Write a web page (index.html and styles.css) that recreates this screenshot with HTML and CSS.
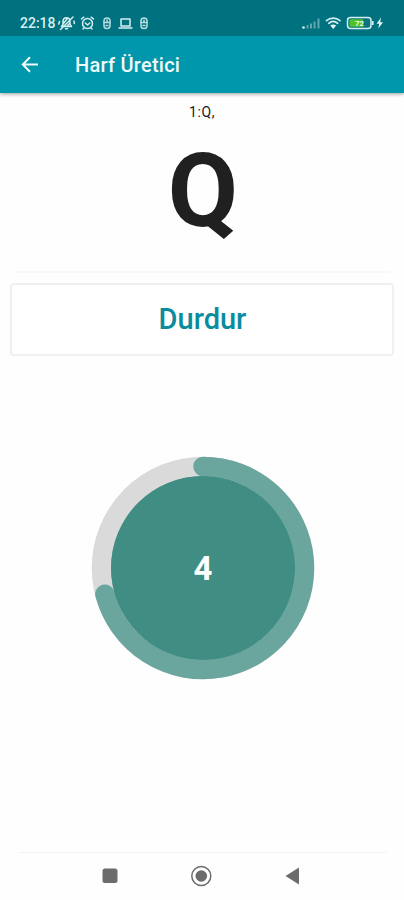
FILE: index.html
```html
<!DOCTYPE html>
<html lang="tr">
<head>
<meta charset="utf-8">
<title>Harf Üretici</title>
<link rel="stylesheet" href="styles.css">
</head>
<body>
<header class="top">
  <div class="status">
    <span class="clock">22:18</span>
    <svg class="left-icons" width="92" height="16" viewBox="0 0 92 16" fill="none" stroke="#d5f0f2" stroke-width="1.5" stroke-linecap="round" stroke-linejoin="round">
      <path d="M3.500 11.500h10l-1.500-2V6.500C12 4 10.500 2.700 8.500 2.700S5 4 5 6.500v3zM7.500 13.800h2M2.500 14.500 15 2M1.500 6.500 .8 9M16 6l.3 2.500M5 9l4-5M9 11l3-3"/>
      <circle cx="29.500" cy="8.500" r="5"/><path d="m23.500 4 2.300-1.800M35.500 4l-2.300-1.800M27.300 8l2.200 2 2.300-2M26 13l-1 1M33 13l1 1"/>
      <g stroke="#b5dde1"><rect x="46" y="3" width="6" height="10.500" rx="2.800"/><path d="M46 7.500h6M49 5v2.500M48 10.500h2"/></g>
      <path d="M63 4h9v7h-9zM61 13h13"/>
      <g stroke="#b5dde1"><rect x="83" y="3" width="6" height="10.500" rx="2.800"/><path d="M83 7.500h6M86 5v2.500M85 10.500h2"/></g>
    </svg>
    <svg class="right-icons" width="84" height="16" viewBox="0 0 84 16">
      <g fill="#5fa7af"><path d="M5.500 10h2v3.500h-2zM9 8.500h2v5H9zM12.500 6.500h2v7h-2zM16.500 3.500h2v10h-2z"/></g>
      <circle cx="2.500" cy="12.500" r="1.300" fill="#e4f6f7"/>
      <g fill="none" stroke="#d5f0f2" stroke-width="1.700" stroke-linecap="round"><path d="M25.500 5.700c4-3.500 9.500-3.500 13.500 0M27.800 8.300c2.700-2.300 6.200-2.300 8.900 0"/></g>
      <path d="M29.300 10.500c2-1.500 3.900-1.500 5.900 0l-2.950 3.500z" fill="#e4f6f7"/>
      <rect x="46.500" y="2.500" width="23.500" height="11" rx="3" fill="#087580" stroke="#d5f0f2" stroke-width="1.500"/>
      <path d="M50 4.200h12v7.600H50q-1.500 0-1.500-1.500V5.700q0-1.500 1.500-1.500z" fill="#4fc22c"/>
      <path d="M71.800 6v4" stroke="#d5f0f2" stroke-width="1.600"/>
      <text x="54" y="11" class="charge">72</text>
      <path d="m80 2.500-4.400 6.200h2.600L77.300 13.500 82 7.200h-2.800z" fill="#e4f6f7"/>
    </svg>
  </div>
  <div class="appbar">
    <svg width="18" height="18" viewBox="0 0 18 18" fill="none" stroke="#effafa" stroke-width="2"><path d="M17 8.500H2M9 1.300 1.800 8.500 9 15.700"/></svg>
    <h1>Harf Üretici</h1>
  </div>
</header>
<main>
  <p class="history">1:Q,</p>
  <p class="letter">Q</p>
  <hr>
  <button class="stop">Durdur</button>
  <svg class="timer" width="224" height="224" viewBox="0 0 224 224">
    <circle cx="112" cy="112" r="101.500" fill="#408d83" stroke="#dadada" stroke-width="19.500"/>
    <path d="M112 10.500A101.500 101.500 0 1 1 13.900 138.200" fill="none" stroke="#6aa69e" stroke-width="19.500" stroke-linecap="round"/>
    <circle cx="112" cy="112" r="92" fill="#408d83"/>
    <text x="112" y="124" text-anchor="middle" class="count">4</text>
  </svg>
</main>
<footer>
  <svg width="404" height="47" viewBox="0 0 404 47" fill="#6c6c6c">
    <rect x="102.500" y="15.500" width="15" height="14.500" rx="2.500"/>
    <circle cx="201.300" cy="23" r="9.500" fill="none" stroke="#6c6c6c" stroke-width="1.500"/><circle cx="201.300" cy="23" r="5.800"/>
    <path d="M285.500 23 299 14.500v17z"/>
  </svg>
</footer>
</body>
</html>
```
FILE: styles.css
```css
* { box-sizing: border-box; }
body {
  margin: 0;
  height: 900px;
  display: flex;
  flex-direction: column;
  background: #fefefe;
  font-family: Roboto, "Liberation Sans", sans-serif;
  overflow: hidden;
}
.top { box-shadow: 0 1px 4px rgba(0, 0, 0, .4); }
.status {
  height: 36px;
  padding: 10px 19px 0 20px;
  display: flex;
  align-items: flex-start;
  background: #00717f;
  color: #d5f0f2;
}
.clock { width: 38px; font-size: 14px; line-height: 27px; font-weight: 500; white-space: nowrap; }
.left-icons { margin-top: 5px; }
.right-icons { margin: 5px 0 0 auto; }
.charge { font-size: 8px; font-weight: 700; fill: #e9fbdc; }
.appbar {
  height: 57px;
  padding-left: 21px;
  display: flex;
  align-items: center;
  gap: 36px;
  background: #0096ac;
}
h1 { margin: 0; color: #effafa; font-size: 20px; font-weight: 500; line-height: 24px; letter-spacing: .25px; }
main { flex: 1; display: flex; flex-direction: column; align-items: center; }
.history { margin: 9px 0 0; font-size: 14px; line-height: 20px; letter-spacing: .6px; color: #222; }
.letter { margin: 16px 0 0 2px; font-size: 102px; line-height: 106px; font-weight: 700; color: #202020; }
hr { width: 376px; height: 2px; margin: 27px 0 0; border: 0; background: #f9f9f9; }
.stop {
  width: 384px;
  height: 73px;
  margin: 10px 0 0;
  padding: 0 0 0 1px;
  border: 2px solid #f0f0f0;
  border-radius: 4px;
  background: #fff;
  color: #098d9e;
  font: 500 29px/69px Roboto, sans-serif;
}
.timer { margin: 100px 0 0 1px; }
.count { font-size: 33px; font-weight: 700; fill: #fff; }
footer { height: 48px; display: flex; flex-direction: column; align-items: center; }
footer::before { content: ""; width: 369px; height: 1px; background: #f4f4f4; }
footer svg { display: block; }
```
